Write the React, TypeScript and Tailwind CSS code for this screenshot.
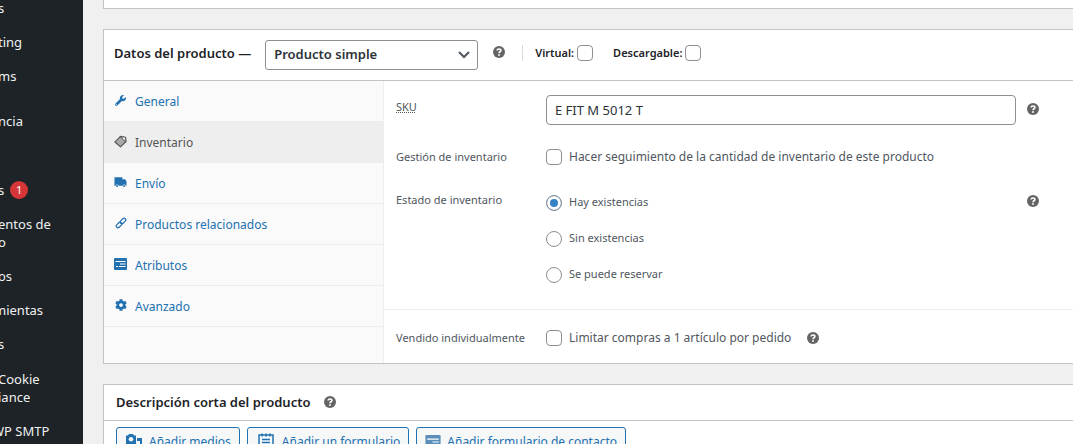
import type { ReactNode } from 'react'
import { FaCog, FaWrench } from 'react-icons/fa'

const menu = [
  { lines: ['s'] },
  { lines: ['ting'] },
  { lines: ['ms'], gap: 'mb-[11px]' },
  { lines: ['ncia'], gap: 'mb-[35px]' },
  { lines: ['s'], count: 1 },
  { lines: ['entos de', 'o'] },
  { lines: ['os'] },
  { lines: ['mientas'], shift: '-ml-1.5' },
  { lines: ['s'], gap: 'mb-px' },
  { lines: ['Cookie', 'iance'] },
  { lines: ['WP SMTP'], shift: '-ml-2' },
]

const tabs = [
  { label: 'General', icon: <FaWrench className="size-[11px]" /> },
  { label: 'Inventario', icon: <TagIcon />, active: true },
  { label: 'Envío', icon: <TruckIcon /> },
  { label: 'Productos relacionados', icon: <LinkIcon /> },
  { label: 'Atributos', icon: <CardIcon className="h-3 w-[13px]" /> },
  { label: 'Avanzado', icon: <FaCog className="size-3" /> },
]

const stock = ['Hay existencias', 'Sin existencias', 'Se puede reservar']

function TagIcon() {
  return (
    <svg viewBox="0 0 14 13" className="h-[13px] w-3.5">
      <path d="M1 7 7 1l5.500 1L13 6.500 7 12.300z" fill="#aaa" stroke="#555" strokeWidth="1.200" strokeLinejoin="round" />
      <path d="M6.500 1.200 12 6.800" stroke="#555" strokeWidth="1" />
      <circle cx="10.800" cy="3.300" r="1" fill="#fff" />
    </svg>
  )
}

function TruckIcon() {
  return (
    <svg viewBox="0 0 14 12" className="h-3 w-3.5" fill="currentColor">
      <path d="M.5 1h8.500v2h3L13.500 5.500V10h-.8a1.700 1.700 0 0 0-3.300 0H5a1.700 1.700 0 0 0-3.300 0H.5z" />
      <circle cx="3.300" cy="10.300" r="1.100" />
      <circle cx="11" cy="10.300" r="1.100" />
    </svg>
  )
}

function LinkIcon() {
  return (
    <svg viewBox="0 0 12 12" className="size-3" fill="none" stroke="currentColor" strokeWidth="1.200">
      <rect x="-3.200" y="-1.700" width="6.400" height="3.400" rx="1.700" transform="translate(4 8) rotate(-45)" />
      <rect x="-3.200" y="-1.700" width="6.400" height="3.400" rx="1.700" transform="translate(8 4) rotate(-45)" />
    </svg>
  )
}

function CardIcon({ className }: { className: string }) {
  return (
    <svg viewBox="0 0 13 12" className={className}>
      <rect width="13" height="12" rx="1" fill="currentColor" />
      <path d="M1.500 3.500h10M6 6h5.500M2 8.500h2M5 8.500h6.500" stroke="#fff" strokeWidth="1" />
    </svg>
  )
}

function MediaIcon() {
  return (
    <svg viewBox="0 0 18 18" className="size-[18px]" fill="currentColor">
      <path d="M3 2.500 4 1h4l1 1.500h2V11H1V2.500z" />
      <circle cx="6" cy="6.300" r="2.300" fill="#f6f7f7" />
      <path d="M12 5h5v9a2 2 0 1 1-2-2V8h-3z" />
    </svg>
  )
}

function FormIcon() {
  return (
    <svg viewBox="0 0 16 18" className="h-[18px] w-5" fill="none" stroke="currentColor" strokeWidth="1.500">
      <path d="M1 2h14v15H1zM4 6.500h8M4 9.500h8M4 12.500h8" />
      <path d="M4 .500v3M8 .500v3M12 .500v3" />
    </svg>
  )
}

function Help() {
  return (
    <button type="button" aria-label="Ayuda" className="block shrink-0 text-[#646464]">
      <svg viewBox="0 0 12 12" className="size-3">
        <circle cx="6" cy="6" r="6" fill="currentColor" />
        <path d="M4.100 4.500C4.200 2.500 7.900 2.500 7.900 4.500 7.900 5.800 6 5.700 6 7.200" fill="none" stroke="#fff" strokeWidth="1.600" />
        <circle cx="6" cy="9" r=".9" fill="#fff" />
      </svg>
    </button>
  )
}

function Checkbox({ id }: { id: string }) {
  return (
    <input
      id={id}
      type="checkbox"
      className="size-4 shrink-0 appearance-none rounded border border-[#8c8f94] bg-white checked:bg-[#3582c4]"
    />
  )
}

function Row({ label, children }: { label: ReactNode; children: ReactNode }) {
  return (
    <div className="flex pl-3">
      <div className="w-[150px] shrink-0 text-[11px] leading-4">{label}</div>
      {children}
    </div>
  )
}

function MediaButton({ icon, children }: { icon: ReactNode; children: ReactNode }) {
  return (
    <button
      type="button"
      className="flex h-[30px] shrink-0 items-center gap-1.5 rounded-[3px] border border-[#2271b1] bg-[#f6f7f7] px-2 text-[12px] text-[#2271b1]"
    >
      {icon}
      {children}
    </button>
  )
}

export default function App() {
  return (
    <div className="flex h-screen overflow-hidden bg-[#f0f0f1] font-['Noto_Sans',sans-serif] text-[12px] text-[#50575e]">
      <nav className="w-[83px] shrink-0 overflow-hidden bg-[#1d2327] text-[13px] leading-[18px] text-[#f0f0f1]">
        <ul className="-mt-[9px]">
          {menu.map((item, i) => (
            <li key={i} className={item.gap}>
              <a href="#" className={`flex items-center gap-1.5 py-2 whitespace-nowrap ${item.shift ?? '-ml-0.5'}`}>
                <span>
                  {item.lines.map((line) => (
                    <span key={line} className="block">
                      {line}
                    </span>
                  ))}
                </span>
                {item.count && (
                  <span className="size-[18px] rounded-full bg-[#d63638] text-center text-[11px] text-white">
                    {item.count}
                  </span>
                )}
              </a>
            </li>
          ))}
        </ul>
      </nav>

      <main className="flex min-w-0 flex-1 flex-col gap-5 pl-5">
        <div className="h-[9px] shrink-0 border-b border-l border-[#c3c4c7] bg-white" />

        <section className="shrink-0 border border-r-0 border-[#c3c4c7] bg-white">
          <header className="flex h-[51px] items-center border-b border-[#c3c4c7] pl-2.5 text-[#1d2327]">
            <label htmlFor="type" className="pb-0.5 text-[13px] font-semibold">
              Datos del producto —
            </label>
            <div className="relative ml-3.5">
              <select
                id="type"
                className="h-[30px] w-[213px] appearance-none rounded-[3px] border border-[#8c8f94] bg-white pl-2 text-[13px] font-semibold text-[#2c3338]"
              >
                <option>Producto simple</option>
              </select>
              <svg viewBox="0 0 12 8" className="pointer-events-none absolute top-[11px] right-2 h-2 w-3">
                <path d="m1 1 5 5 5-5" fill="none" stroke="#50575e" strokeWidth="2" />
              </svg>
            </div>
            <div className="mr-[17px] ml-[15px] pb-1.5">
              <Help />
            </div>
            <div className="mb-1 flex h-4 items-center border-l border-[#dcdcde] pl-3 text-[11px] font-semibold">
              <label htmlFor="virtual" className="mr-[3px]">
                Virtual:
              </label>
              <Checkbox id="virtual" />
              <label htmlFor="download" className="mr-[3px] ml-5">
                Descargable:
              </label>
              <Checkbox id="download" />
            </div>
          </header>

          <div className="flex">
            <ul className="w-[280px] shrink-0 border-r border-[#eee] bg-[#fafafa] pb-9">
              {tabs.map((tab) => (
                <li key={tab.label}>
                  <a
                    href="#"
                    className={`flex h-[41px] items-center gap-2 border-b border-[#eee] pt-0.5 pl-2.5 text-[12px] ${
                      tab.active ? 'bg-[#eee] text-[#555]' : 'text-[#2271b1]'
                    }`}
                  >
                    <span className="flex w-[13px] justify-center pb-1">{tab.icon}</span>
                    {tab.label}
                  </a>
                </li>
              ))}
            </ul>

            <div className="min-w-0 flex-1">
              <div className="h-[229px] border-b border-[#eee] pt-3.5">
                <Row
                  label={
                    <label htmlFor="sku" className="block pt-1">
                      <abbr title="Stock Keeping Unit">SKU</abbr>
                    </label>
                  }
                >
                  <input
                    id="sku"
                    defaultValue="E FIT M 5012 T"
                    className="h-[30px] min-w-0 flex-1 rounded border border-[#8c8f94] px-2 text-[13px] text-[#2c3338]"
                  />
                  <div className="mr-[34px] ml-[11px] pt-2">
                    <Help />
                  </div>
                </Row>
                <div className="pt-6">
                  <Row label={<label htmlFor="manage">Gestión de inventario</label>}>
                    <Checkbox id="manage" />
                    <label htmlFor="manage" className="ml-[7px] leading-4">
                      Hacer seguimiento de la cantidad de inventario de este producto
                    </label>
                  </Row>
                </div>
                <fieldset className="pt-[27px]">
                  <Row label="Estado de inventario">
                    <div className="flex flex-1 flex-col gap-[18px] pt-0.5">
                      {stock.map((name, i) => (
                        <label key={name} className="flex items-center gap-[7px] text-[11px] leading-4">
                          <input
                            type="radio"
                            name="stock"
                            defaultChecked={i === 0}
                            className="size-4 appearance-none rounded-full border border-[#8c8f94] bg-white checked:bg-[#3582c4] checked:shadow-[inset_0_0_0_3px_#fff]"
                          />
                          <span className="pb-0.5">{name}</span>
                        </label>
                      ))}
                    </div>
                    <div className="mr-[34px] pt-[3px]">
                      <Help />
                    </div>
                  </Row>
                </fieldset>
              </div>
              <div className="pt-5">
                <Row label={<label htmlFor="single">Vendido individualmente</label>}>
                  <Checkbox id="single" />
                  <label htmlFor="single" className="mr-4 ml-[7px] leading-4">
                    Limitar compras a 1 artículo por pedido
                  </label>
                  <Help />
                </Row>
              </div>
            </div>
          </div>
        </section>

        <section className="shrink-0 border border-r-0 border-[#c3c4c7] bg-white">
          <header className="flex h-9 items-center gap-3.5 border-b border-[#c3c4c7] pl-3">
            <h2 className="text-[13px] font-semibold text-[#1d2327]">Descripción corta del producto</h2>
            <div className="pb-0.5">
              <Help />
            </div>
          </header>
          <div className="flex gap-[7px] pt-1.5 pb-3 pl-3">
            <MediaButton icon={<MediaIcon />}>Añadir medios</MediaButton>
            <MediaButton icon={<FormIcon />}>Añadir un formulario</MediaButton>
            <MediaButton icon={<CardIcon className="h-3.5 w-4 text-[#5b8fb9]" />}>Añadir formulario de contacto</MediaButton>
          </div>
        </section>
      </main>
    </div>
  )
}
